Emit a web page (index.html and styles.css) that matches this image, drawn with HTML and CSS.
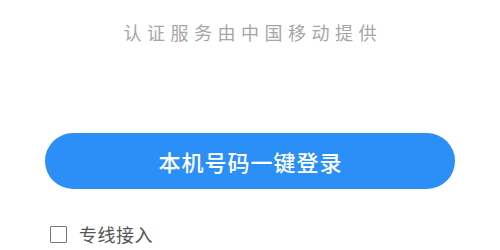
FILE: index.html
```html
<!DOCTYPE html>
<html lang="zh">
<head>
<meta charset="utf-8">
<link rel="stylesheet" href="styles.css">
</head>
<body>
<div class="page">
  <div class="provider">认证服务由中国移动提供</div>
  <button class="login-btn">本机号码一键登录</button>
  <label class="option">
    <span class="box"></span>
    <span class="option-text">专线接入</span>
  </label>
</div>
</body>
</html>
```
FILE: styles.css
```css
html, body {
  margin: 0;
  padding: 0;
  background: #ffffff;
}
.page {
  width: 500px;
  height: 250px;
  overflow: hidden;
  display: flex;
  flex-direction: column;
  font-family: "Noto Sans CJK SC", "Noto Sans", sans-serif;
}
.provider {
  margin-top: 21px;
  height: 22px;
  line-height: 22px;
  font-size: 18px;
  color: #a6a6a6;
  letter-spacing: 5.5px;
  padding-left: 5.5px;
  text-align: center;
}
.login-btn {
  margin: 90px 0 0 45px;
  width: 410px;
  height: 56px;
  border: none;
  border-radius: 28px;
  background: #2b8ff7;
  color: #ffffff;
  font-family: "Noto Sans CJK SC", "Noto Sans", sans-serif;
  font-size: 22px;
  font-weight: 500;
  letter-spacing: 1px;
  padding: 0 0 0 1px;
  line-height: 56px;
}
.option {
  margin: 34px 0 0 50px;
  display: flex;
  align-items: center;
  gap: 12px;
}
.box {
  width: 15px;
  height: 15px;
  border: 1.5px solid #777777;
  border-radius: 1px;
  box-sizing: content-box;
}
.option-text {
  font-size: 18px;
  line-height: 22px;
  color: #555555;
  letter-spacing: 0.5px;
}
```
